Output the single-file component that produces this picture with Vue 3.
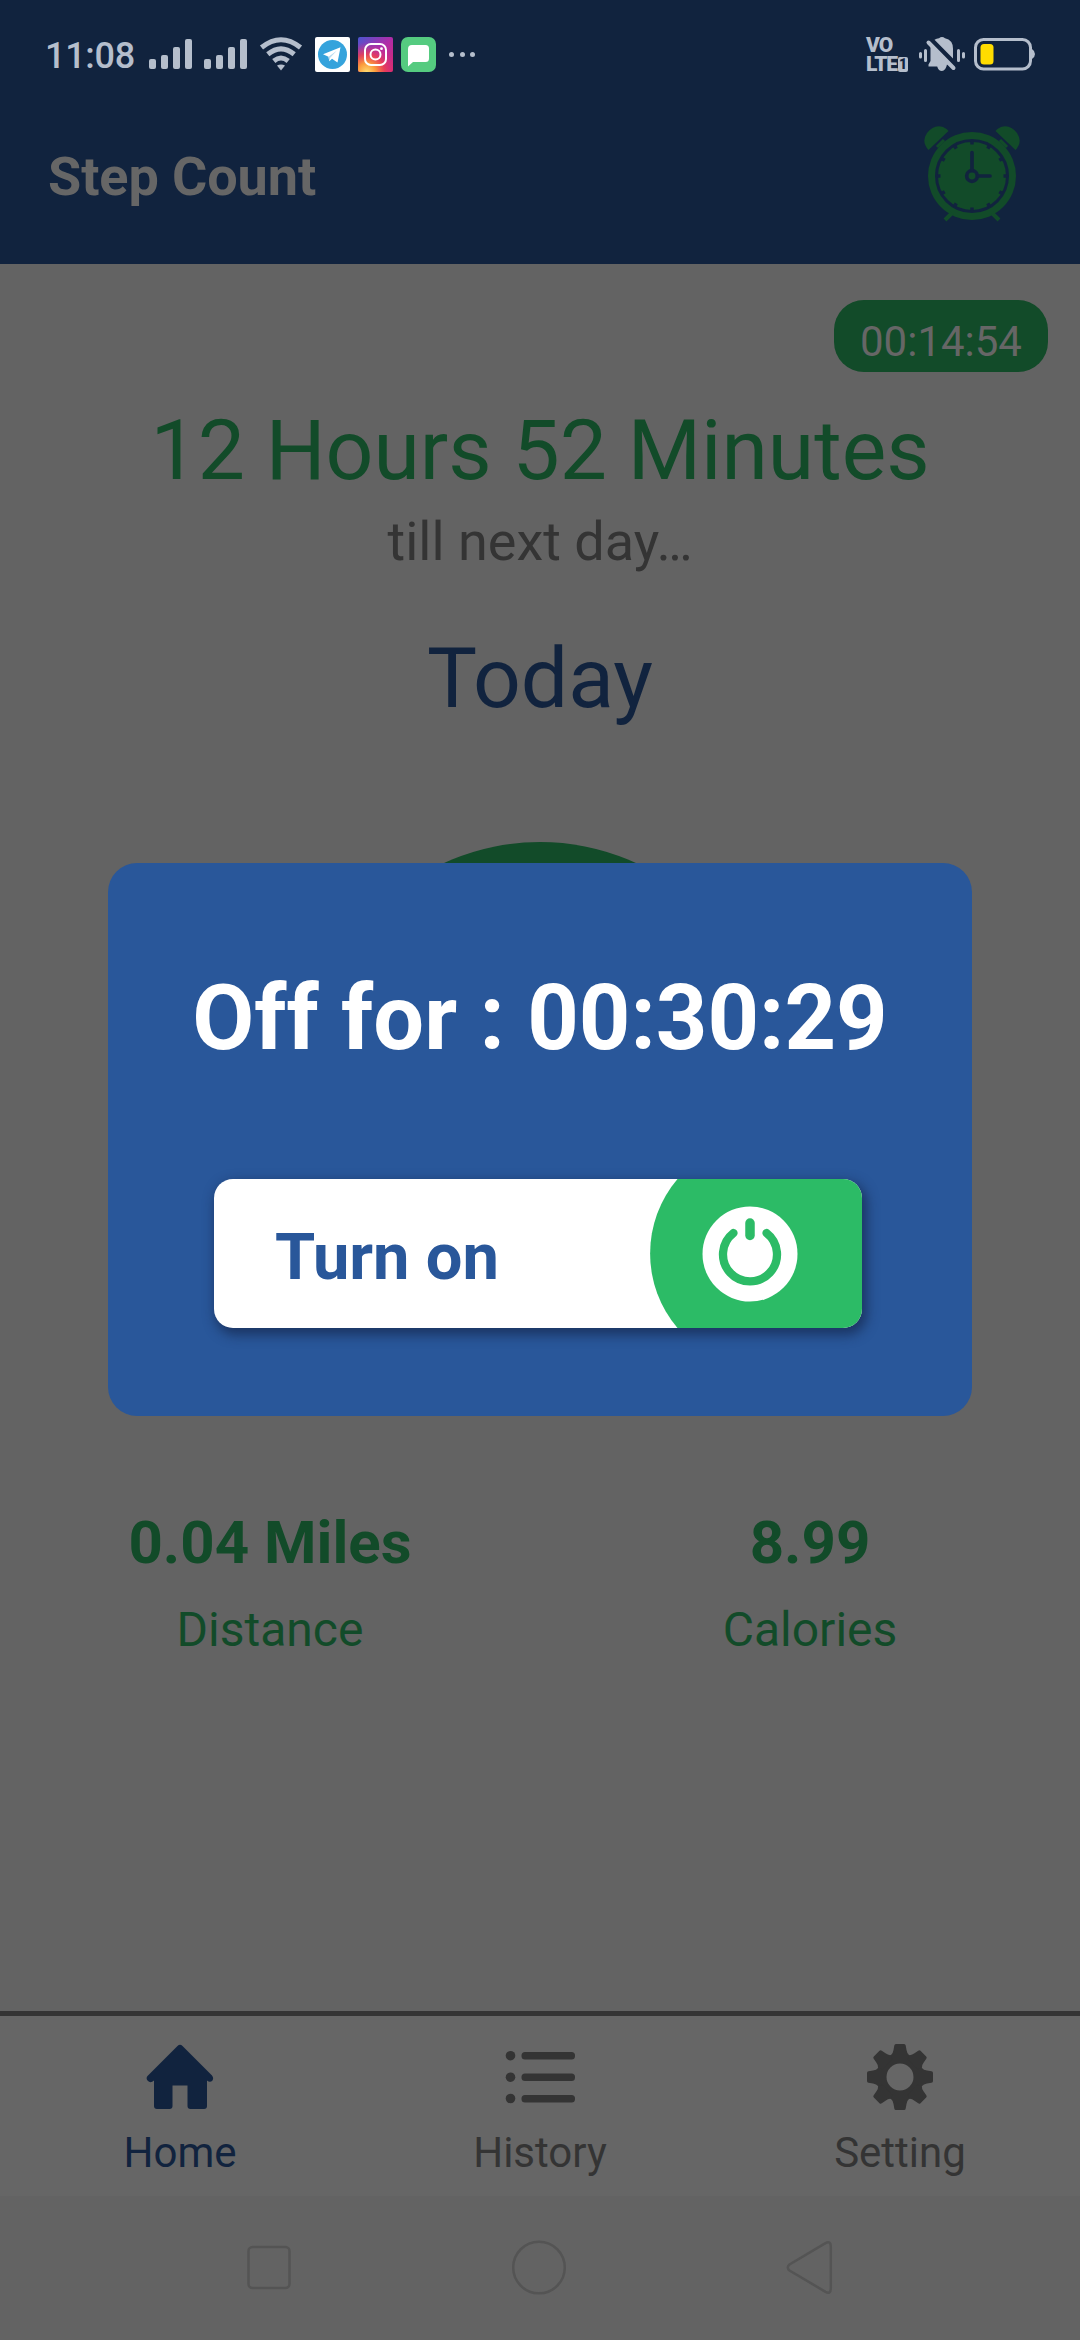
<script setup>
const signals = [0, 1]
const bars = [10, 14, 22, 30]
const ticks = Array.from({ length: 12 }, (_, i) => i * 30)
const teeth = Array.from({ length: 8 }, (_, i) => i * 45)
const stats = [
  { value: '0.04 Miles', label: 'Distance' },
  { value: '8.99', label: 'Calories' },
]
const tabs = [
  { id: 'home', label: 'Home' },
  { id: 'history', label: 'History' },
  { id: 'setting', label: 'Setting' },
]
</script>

<template>
  <div class="screen">
    <header class="header">
      <div class="status">
        <span class="clock">11:08</span>
        <div v-for="s in signals" :key="s" class="signal">
          <i v-for="h in bars" :key="h" :style="{ height: h + 'px' }"></i>
        </div>
        <svg class="wifi" width="44" height="34" viewBox="0 0 44 34">
          <g fill="none" stroke="#b5becc" stroke-width="5">
            <path d="M2.5 10.5Q22 -5 41.5 10.5" />
            <path d="M8.8 17.2Q22 6.4 35.2 17.2" />
            <path d="M14.8 24Q22 18 29.2 24" />
          </g>
          <path d="M18 28.6Q22 26.400 26 28.600L22 33.500Z" fill="#b5becc" />
        </svg>
        <svg class="app" width="35" height="35" viewBox="0 0 35 35">
          <rect width="35" height="35" rx="2" fill="#fff" />
          <circle cx="17.500" cy="17.500" r="14.500" fill="#35a3dc" />
          <path d="M8 17.300L25.500 10.300L22.500 25.500L17 21.700L14.300 24.300L13.500 19.800Z" fill="#fff" />
          <path d="M13.500 19.800L22 13.500L15.200 20.700L14.300 24.300Z" fill="#b9dcf0" />
        </svg>
        <svg class="app" width="35" height="35" viewBox="0 0 35 35">
          <defs>
            <linearGradient id="ig" x1="0" y1="0" x2="1" y2="1">
              <stop offset="0" stop-color="#4a55d0" />
              <stop offset=".5" stop-color="#b02ca8" />
              <stop offset="1" stop-color="#d92a6a" />
            </linearGradient>
            <radialGradient id="ig2" cx=".25" cy="1" r=".85">
              <stop offset="0" stop-color="#ffdc70" />
              <stop offset=".3" stop-color="#fb9a3c" />
              <stop offset=".6" stop-color="#ee4150" stop-opacity=".85" />
              <stop offset="1" stop-color="#d02c90" stop-opacity="0" />
            </radialGradient>
          </defs>
          <rect width="35" height="35" rx="2" fill="url(#ig)" />
          <rect width="35" height="35" rx="2" fill="url(#ig2)" />
          <g fill="none" stroke="#fff" stroke-width="2">
            <rect x="7" y="7" width="21" height="21" rx="6" />
            <circle cx="17.500" cy="17.500" r="5" />
          </g>
          <circle cx="23.500" cy="11.700" r="1.400" fill="#fff" />
        </svg>
        <svg class="app" width="35" height="35" viewBox="0 0 35 35">
          <rect width="35" height="35" rx="7" fill="#55cb80" />
          <path d="M11 8H24.500Q28 8 28 11.500V21.500Q28 25 24.500 25H12L7 29.500V12Q7 8 11 8Z" fill="#fff" />
        </svg>
        <div class="dots"><i></i><i></i><i></i></div>
        <div class="volte">
          <span>VO</span>
          <span class="lte">LTE<b>1</b></span>
        </div>
        <svg class="bell" width="46" height="35" viewBox="0 0 46 35">
          <g fill="#b5becc">
            <path d="M15.500 2.800Q17.500 1.500 20 1.200Q23 -1 26 1.200Q34 3 34 11.500V21.500Z" />
            <path d="M11.500 9.500L29.500 27.500H28Q26.500 34 23 34Q19.500 34 18.200 29.500H9.500V27.500L11.500 24Z" />
          </g>
          <g stroke="#b5becc" stroke-width="3" stroke-linecap="round">
            <path d="M9.500 5.500L34.500 31" stroke-width="4" />
            <path d="M1.500 16.500V20M6.500 13.500V23.500M39.500 13.500V23.500M44.500 16.500V20" />
          </g>
        </svg>
        <svg class="battery" width="61" height="34" viewBox="0 0 61 34">
          <rect x="1.500" y="2.500" width="55" height="29.500" rx="8" fill="none" stroke="#b5becc" stroke-width="3" />
          <path d="M58 12Q61 14 61 17T58 22Z" fill="#b5becc" />
          <rect x="6.500" y="7" width="13" height="20.500" rx="3.500" fill="#ffdc00" />
        </svg>
      </div>
      <div class="appbar">
        <h1>Step Count</h1>
        <svg class="alarm" width="96" height="98" viewBox="0 0 96 98">
          <g fill="#124b29">
            <path d="M5.500 25Q-2 17 4 8Q11 -1 20 2Q24.500 4 25.500 6Z" transform="translate(-1 0)" />
            <path d="M90.500 25Q98 17 92 8Q85 -1 76 2Q71.500 4 70.500 6Z" transform="translate(1 0)" />
            <circle cx="48" cy="51" r="44" />
          </g>
          <path d="M13 22L20 15M83 22L76 15" stroke="#124b29" stroke-width="3" />
          <path d="M28 88L21 95M68 88L75 95" stroke="#124b29" stroke-width="4" />
          <circle cx="48" cy="51" r="35.500" fill="none" stroke="#11233e" stroke-width="3" />
          <path
            v-for="t in ticks"
            :key="t"
            d="M48 16V19.500"
            stroke="#11233e"
            stroke-width="3.500"
            :transform="`rotate(${t} 48 51)`"
          />
          <g fill="none" stroke="#11233e" stroke-width="3.700">
            <circle cx="48" cy="51" r="5.300" />
            <path d="M48 45V27.500M54 51H66" stroke-linecap="round" />
          </g>
        </svg>
      </div>
    </header>

    <main class="content">
      <div class="badge">00:14:54</div>
      <p class="remaining">12 Hours 52 Minutes</p>
      <p class="till">till next day…</p>
      <h2 class="today">Today</h2>
      <div class="dial"></div>
      <section class="stats">
        <div v-for="s in stats" :key="s.label" class="stat">
          <strong>{{ s.value }}</strong>
          <span>{{ s.label }}</span>
        </div>
      </section>
    </main>

    <nav class="tabs">
      <div v-for="t in tabs" :key="t.id" class="tab" :class="t.id">
        <svg v-if="t.id === 'home'" width="68" height="66" viewBox="0 0 68 66">
          <path
            d="M31.500 2Q34 -0.500 36.500 2L66 31.500Q68 34 66.500 36.500Q64 39 61 36.500V62Q61 65 58 65H44.500Q41.500 65 41.500 62V41.500H26.500V62Q26.500 65 23.500 65H11Q8 65 8 62V36.500Q4.500 39.500 2 37Q-0.500 34.500 1.500 32Z"
            fill="currentColor"
          />
        </svg>
        <svg v-else-if="t.id === 'history'" width="70" height="66" viewBox="0 0 70 66">
          <g fill="currentColor">
            <circle cx="5.500" cy="11.700" r="4.800" />
            <circle cx="5.500" cy="33.200" r="4.800" />
            <circle cx="5.500" cy="54.500" r="4.800" />
            <rect x="16.500" y="8" width="53.500" height="7.400" rx="3.500" />
            <rect x="16.500" y="29.500" width="53.500" height="7.400" rx="3.500" />
            <rect x="16.500" y="51" width="53.500" height="7.400" rx="3.500" />
          </g>
        </svg>
        <svg v-else width="66" height="66" viewBox="0 0 66 66">
          <circle cx="33" cy="33" r="18.500" fill="none" stroke="currentColor" stroke-width="10" />
          <path
            v-for="a in teeth"
            :key="a"
            d="M24 11Q26 9.500 26.500 6L27.300 1.500Q27.500 0 29 0H37Q38.500 0 38.700 1.500L39.500 6Q40 9.500 42 11L40 15H26Z"
            fill="currentColor"
            :transform="`rotate(${a} 33 33)`"
          />
        </svg>
        <span>{{ t.label }}</span>
      </div>
    </nav>

    <footer class="sysnav">
      <svg width="54" height="56" viewBox="0 0 54 56">
        <rect x="6.500" y="7" width="41" height="41" rx="4" />
      </svg>
      <svg width="56" height="56" viewBox="0 0 56 56">
        <circle cx="28" cy="27.500" r="25.800" />
      </svg>
      <svg width="56" height="56" viewBox="0 0 56 56">
        <path d="M43.500 3.200Q48.800 0.500 48.800 6.500V48.500Q48.800 54.500 43.500 51.800L7.500 30.500Q4 27.500 7.500 24.500Z" />
      </svg>
    </footer>

    <div class="modal">
      <h3>Off for : 00:30:29</h3>
      <button class="switch" type="button">
        <span>Turn on</span>
        <svg width="212" height="149" viewBox="0 0 212 149">
          <path d="M27.500 0H212V149H27.500A115 115 0 0 1 27.500 0Z" fill="#2cbb66" />
          <circle cx="100" cy="75" r="47.500" fill="#fff" />
          <g fill="none" stroke="#2cbb66" stroke-linecap="round">
            <path d="M83.500 54A27 27 0 1 0 116.500 54" stroke-width="8.300" />
            <path d="M100 44V56.500" stroke-width="9.500" />
          </g>
        </svg>
      </button>
    </div>
  </div>
</template>

<style>
body {
  margin: 0;
}
</style>

<style scoped>
.screen {
  position: relative;
  display: flex;
  flex-direction: column;
  width: 1080px;
  height: 2340px;
  overflow: hidden;
  background: #636363;
  font-family: Roboto, 'Liberation Sans', sans-serif;
}
h1,
h2,
h3,
p {
  margin: 0;
}
svg {
  display: block;
  flex: none;
}
.header {
  box-sizing: border-box;
  height: 264px;
  background: #11233e;
}
.status {
  box-sizing: border-box;
  display: flex;
  align-items: center;
  height: 108px;
  padding: 0 45px 0 45px;
  color: #b5becc;
}
.clock {
  width: 104px;
  padding-top: 3px;
  font-size: 36px;
  font-weight: 500;
  line-height: 42px;
  letter-spacing: -0.300px;
  white-space: nowrap;
}
.signal {
  display: flex;
  align-items: flex-end;
  gap: 5px;
  width: 43px;
  height: 30px;
  margin-right: 12px;
}
.signal i {
  width: 7px;
  border-radius: 2px;
  background: #b5becc;
}
.wifi {
  margin-right: 12px;
}
.app {
  margin-right: 8px;
}
.dots {
  display: flex;
  gap: 5.500px;
  margin-left: 5px;
}
.dots i {
  width: 5px;
  height: 5px;
  border-radius: 50%;
  background: #b5becc;
}
.volte {
  display: flex;
  flex-direction: column;
  margin-left: auto;
  width: 42px;
  margin-right: 11px;
  padding-top: 2px;
  font-size: 21px;
  font-weight: 900;
  line-height: 19px;
  letter-spacing: -1.100px;
}
.lte {
  display: flex;
  align-items: center;
}
.lte b {
  width: 11px;
  height: 15px;
  margin-left: 1px;
  border-radius: 2px;
  background: #b5becc;
  color: #11233e;
  font-size: 14px;
  line-height: 15px;
  letter-spacing: 0;
  text-align: center;
}
.bell {
  margin-right: 9px;
}
.appbar {
  display: flex;
  align-items: center;
  justify-content: space-between;
  height: 137px;
  padding: 0 60px 0 48px;
}
.appbar h1 {
  color: #666;
  font-size: 54px;
  font-weight: 700;
  line-height: 64px;
  letter-spacing: -0.100px;
}
.alarm {
  margin-top: -5px;
}
.content {
  display: flex;
  flex-direction: column;
  align-items: center;
  height: 1747px;
}
.badge {
  box-sizing: border-box;
  align-self: flex-end;
  width: 214px;
  height: 72px;
  margin: 36px 32px 30px 0;
  padding-top: 11px;
  border-radius: 30px;
  background: #124b29;
  color: #666;
  font-size: 42px;
  line-height: 61px;
  text-align: center;
}
.remaining {
  color: #124b29;
  font-size: 84px;
  line-height: 98px;
}
.till {
  margin-top: 10px;
  color: #343434;
  font-size: 54px;
  line-height: 64px;
}
.today {
  margin-top: 56px;
  color: #11233e;
  font-size: 84px;
  font-weight: 400;
  line-height: 98px;
}
.dial {
  width: 460px;
  height: 460px;
  margin-top: 114px;
  border-radius: 50%;
  background: #124b29;
}
.stats {
  display: flex;
  width: 100%;
  margin-top: 206px;
  color: #124b29;
}
.stat {
  flex: 1;
  display: flex;
  flex-direction: column;
  align-items: center;
  gap: 24px;
}
.stat strong {
  font-size: 60px;
  line-height: 70px;
}
.stat span {
  font-size: 48px;
  line-height: 56px;
}
.tabs {
  box-sizing: border-box;
  display: flex;
  height: 185px;
  padding-top: 28px;
  border-top: 5px solid #343434;
  background: #666;
}
.tab {
  flex: 1;
  display: flex;
  flex-direction: column;
  align-items: center;
  gap: 18px;
  color: #343434;
  font-size: 42px;
  line-height: 50px;
}
.tab.home {
  color: #11233e;
}
.sysnav {
  display: flex;
  align-items: flex-start;
  justify-content: center;
  gap: 215px;
  height: 144px;
  padding-top: 44px;
  box-sizing: border-box;
}
.sysnav svg {
  fill: none;
  stroke: #545454;
  stroke-width: 2.500;
}
/* Dialog floats over the dimmed page */
.modal {
  position: absolute;
  top: 863px;
  left: 108px;
  box-sizing: border-box;
  width: 864px;
  height: 553px;
  padding-top: 103px;
  border-radius: 29px;
  background: #29579a;
}
.modal h3 {
  color: #fff;
  font-size: 90px;
  font-weight: 700;
  line-height: 106px;
  text-align: center;
  white-space: nowrap;
}
.switch {
  display: flex;
  align-items: center;
  justify-content: space-between;
  width: 648px;
  height: 149px;
  margin: 107px 0 0 106px;
  padding: 0 0 0 61px;
  overflow: hidden;
  border: 0;
  border-radius: 19px;
  background: #fff;
  box-shadow: 3px 5px 12px 2px rgba(20, 35, 70, 0.65);
  color: #29579a;
  font-family: inherit;
  font-size: 65px;
  font-weight: 700;
}
.switch span {
  padding-top: 7px;
}
</style>
